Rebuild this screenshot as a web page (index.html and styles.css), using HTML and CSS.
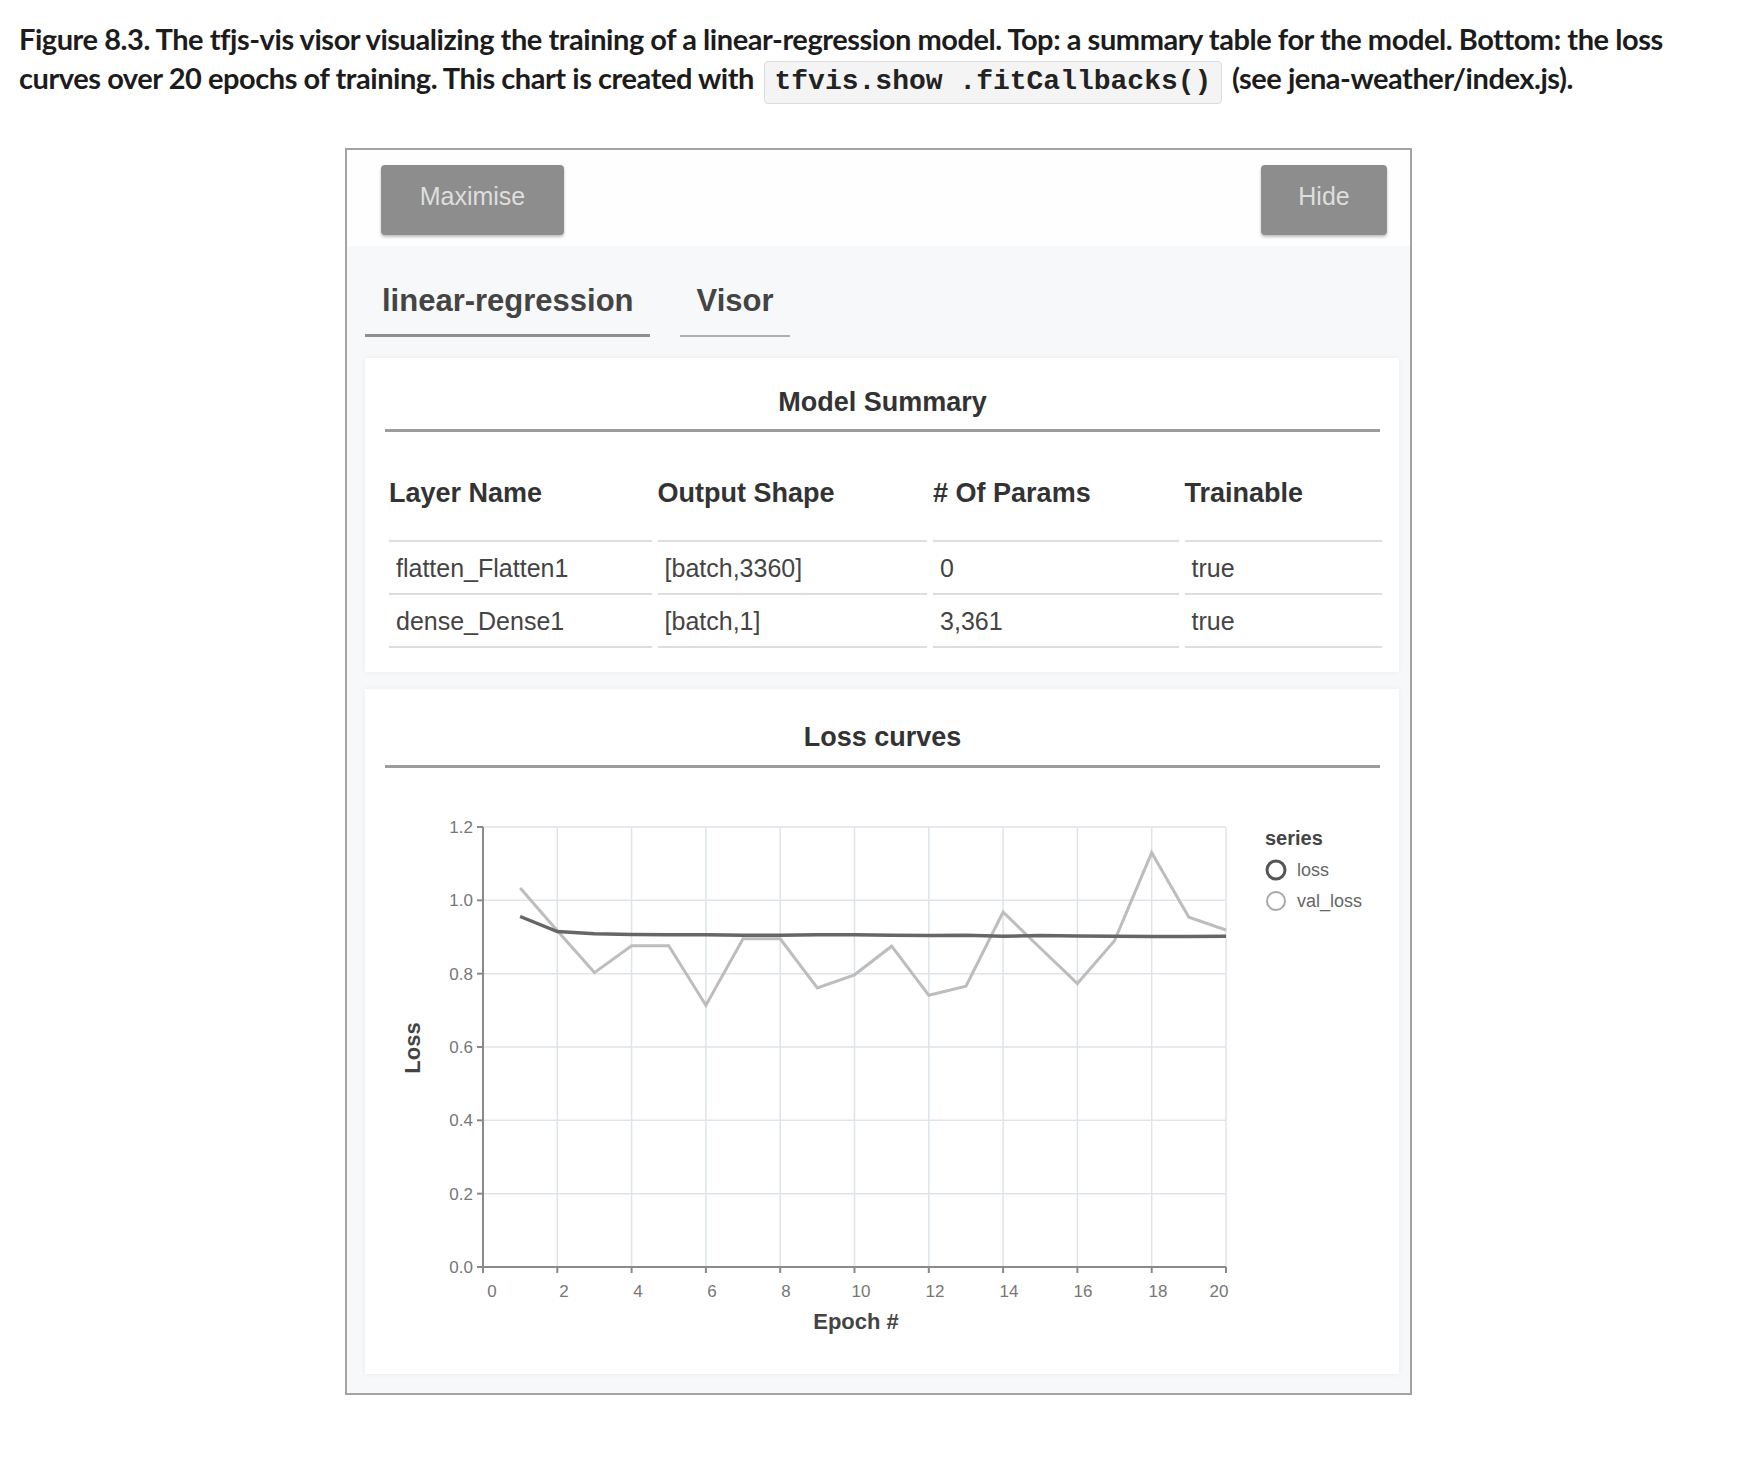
FILE: index.html
```html
<!DOCTYPE html>
<html>
<head>
<meta charset="utf-8">
<link rel="stylesheet" href="styles.css">
</head>
<body>
<p class="caption">Figure 8.3. The tfjs-vis visor visualizing the training of a linear-regression model. Top: a summary table for the model. Bottom: the loss curves over 20 epochs of training. This chart is created with <code class="code">tfvis.show .fitCallbacks()</code> (see jena-weather/index.js).</p>

<div class="visor">
  <div class="visor-head">
    <button class="btn btn-max">Maximise</button>
    <button class="btn btn-hide">Hide</button>
  </div>
  <div class="visor-body">
    <div class="tabs">
      <div class="tab tab-active">linear-regression</div>
      <div class="tab tab-visor">Visor</div>
    </div>

    <section class="card card-summary">
      <h2 class="card-title">Model Summary</h2>
      <table class="summary">
        <thead>
          <tr>
            <th class="c1">Layer Name</th>
            <th class="c2">Output Shape</th>
            <th class="c3"># Of Params</th>
            <th class="c4">Trainable</th>
          </tr>
        </thead>
        <tbody>
          <tr>
            <td>flatten_Flatten1</td>
            <td>[batch,3360]</td>
            <td>0</td>
            <td>true</td>
          </tr>
          <tr>
            <td>dense_Dense1</td>
            <td>[batch,1]</td>
            <td>3,361</td>
            <td>true</td>
          </tr>
        </tbody>
      </table>
    </section>

    <section class="card card-loss">
      <h2 class="card-title card-title-loss">Loss curves</h2>
      <svg class="chart" width="1034" height="570" viewBox="0 0 1034 570">
        <g class="grid">
          <line x1="118" y1="41" x2="861" y2="41"/>
          <line x1="118" y1="114.33" x2="861" y2="114.33"/>
          <line x1="118" y1="187.67" x2="861" y2="187.67"/>
          <line x1="118" y1="261" x2="861" y2="261"/>
          <line x1="118" y1="334.33" x2="861" y2="334.33"/>
          <line x1="118" y1="407.67" x2="861" y2="407.67"/>
          <line x1="192.3" y1="41" x2="192.3" y2="481"/>
          <line x1="266.6" y1="41" x2="266.6" y2="481"/>
          <line x1="340.9" y1="41" x2="340.9" y2="481"/>
          <line x1="415.2" y1="41" x2="415.2" y2="481"/>
          <line x1="489.5" y1="41" x2="489.5" y2="481"/>
          <line x1="563.8" y1="41" x2="563.8" y2="481"/>
          <line x1="638.1" y1="41" x2="638.1" y2="481"/>
          <line x1="712.4" y1="41" x2="712.4" y2="481"/>
          <line x1="786.7" y1="41" x2="786.7" y2="481"/>
          <line x1="861" y1="41" x2="861" y2="481"/>
        </g>
        <g class="axis">
          <line x1="118" y1="41" x2="118" y2="481"/>
          <line x1="118" y1="481" x2="861" y2="481"/>
          <line x1="112" y1="41" x2="118" y2="41"/>
          <line x1="112" y1="114.33" x2="118" y2="114.33"/>
          <line x1="112" y1="187.67" x2="118" y2="187.67"/>
          <line x1="112" y1="261" x2="118" y2="261"/>
          <line x1="112" y1="334.33" x2="118" y2="334.33"/>
          <line x1="112" y1="407.67" x2="118" y2="407.67"/>
          <line x1="112" y1="481" x2="118" y2="481"/>
          <line x1="118" y1="481" x2="118" y2="487"/>
          <line x1="192.3" y1="481" x2="192.3" y2="487"/>
          <line x1="266.6" y1="481" x2="266.6" y2="487"/>
          <line x1="340.9" y1="481" x2="340.9" y2="487"/>
          <line x1="415.2" y1="481" x2="415.2" y2="487"/>
          <line x1="489.5" y1="481" x2="489.5" y2="487"/>
          <line x1="563.8" y1="481" x2="563.8" y2="487"/>
          <line x1="638.1" y1="481" x2="638.1" y2="487"/>
          <line x1="712.4" y1="481" x2="712.4" y2="487"/>
          <line x1="786.7" y1="481" x2="786.7" y2="487"/>
          <line x1="861" y1="481" x2="861" y2="487"/>
        </g>
        <g class="ylabels">
          <text x="108" y="47">1.2</text>
          <text x="108" y="120.33">1.0</text>
          <text x="108" y="193.67">0.8</text>
          <text x="108" y="267">0.6</text>
          <text x="108" y="340.33">0.4</text>
          <text x="108" y="413.67">0.2</text>
          <text x="108" y="487">0.0</text>
        </g>
        <g class="xlabels">
          <text x="127" y="511">0</text>
          <text x="199" y="511">2</text>
          <text x="273" y="511">4</text>
          <text x="347" y="511">6</text>
          <text x="421" y="511">8</text>
          <text x="496" y="511">10</text>
          <text x="570" y="511">12</text>
          <text x="644" y="511">14</text>
          <text x="718" y="511">16</text>
          <text x="793" y="511">18</text>
          <text x="854" y="511">20</text>
        </g>
        <text class="axis-title" x="491" y="543">Epoch #</text>
        <text class="axis-title" transform="translate(55 262) rotate(-90)">Loss</text>
        <polyline class="val-line" points="155.15,101.9 192.3,144.8 229.45,186.6 266.6,159.8 303.75,159.8 340.9,219.2 378.05,152.8 415.2,152.8 452.35,202 489.5,188.8 526.65,160.2 563.8,209.3 600.95,200.1 638.1,126.1 675.25,162 712.4,197.6 749.55,154.7 786.7,66.7 823.85,131.2 861,144"/>
        <polyline class="loss-line" points="155.15,130.5 192.3,145.5 229.45,147.7 266.6,148.4 303.75,148.8 340.9,148.8 378.05,149.2 415.2,149.2 452.35,148.8 489.5,148.8 526.65,149.2 563.8,149.5 600.95,149.2 638.1,150.3 675.25,149.5 712.4,149.9 749.55,150.3 786.7,150.6 823.85,150.6 861,150.3"/>
        <g class="legend">
          <text class="legend-title" x="900" y="59">series</text>
          <circle class="lg-loss" cx="911" cy="84" r="9"/>
          <text x="932" y="90">loss</text>
          <circle class="lg-val" cx="911" cy="115" r="9"/>
          <text x="932" y="121">val_loss</text>
        </g>
      </svg>
    </section>
  </div>
</div>
</body>
</html>
```
FILE: styles.css
```css
html, body {
  margin: 0;
  padding: 0;
  background: #ffffff;
}

.caption {
  margin: 0;
  padding: 19px 0 0 19px;
  width: 1690px;
  font-family: "Lato", "Liberation Sans", sans-serif;
  font-weight: 700;
  font-size: 29px;
  line-height: 39px;
  color: #1c1c1c;
  letter-spacing: -0.45px;
}

.code {
  display: inline-block;
  font-family: "Liberation Mono", monospace;
  font-weight: 700;
  font-size: 28px;
  line-height: 31px;
  letter-spacing: 0;
  color: #222;
  background: #f4f4f4;
  border: 1px solid #dcdcdc;
  border-radius: 4px;
  padding: 4px 10px 6px;
  margin: -4px 3px;
  vertical-align: baseline;
}

.visor {
  margin: 48px 0 0 345px;
  width: 1063px;
  border: 2px solid #a3a3a3;
  background: #fdfdfd;
  font-family: "Liberation Sans", Arial, sans-serif;
  color: #333;
}

.visor-head {
  height: 96px;
  display: flex;
  justify-content: space-between;
  align-items: flex-start;
  padding: 15px 23px 0 34px;
  box-sizing: border-box;
  background: #fefefe;
}

.btn {
  height: 70px;
  border: none;
  border-radius: 4px;
  background: #8d8d8d;
  color: #dedede;
  font-family: "Liberation Sans", Arial, sans-serif;
  font-size: 25px;
  box-shadow: 0 2px 3px rgba(0, 0, 0, 0.25);
  padding: 0 0 7px 0;
}

.btn-max { width: 183px; }
.btn-hide { width: 126px; }

.visor-body {
  background: #f7f8f9;
  padding: 0 11px 19px 18px;
}

.tabs {
  display: flex;
  gap: 30px;
  padding-top: 37px;
}

.tab {
  font-weight: 700;
  font-size: 31px;
  line-height: 36px;
  color: #444;
  padding: 0 16px 15px 17px;
  border-bottom: 3px solid #8f8f8f;
}

.tab-visor {
  border-bottom: 2px solid #b0b0b0;
  padding-bottom: 16px;
}

.card {
  background: #ffffff;
  box-shadow: 0 0 5px rgba(0, 0, 0, 0.06);
  padding: 0 19px 0 20px;
}

.card-summary {
  margin-top: 21px;
  padding-bottom: 24px;
}

.card-loss {
  margin-top: 17px;
  padding: 0 0 18px 0;
}

.card-title {
  margin: 0;
  padding-top: 26px;
  padding-bottom: 9px;
  font-size: 27px;
  line-height: 36px;
  font-weight: 700;
  text-align: center;
  color: #333;
  border-bottom: 3px solid #9c9c9c;
}

.card-title-loss {
  margin: 0 19px 18px 20px;
  padding-top: 30px;
  padding-bottom: 10px;
}

.summary {
  border-collapse: separate;
  border-spacing: 6px 0;
  margin-left: -2px;
  width: 1005px;
}

.summary th {
  text-align: left;
  font-weight: 700;
  font-size: 27px;
  line-height: 34px;
  color: #333;
  padding: 44px 0 30px 0;
  border-bottom: 2px solid #dddddd;
}

.summary td {
  font-size: 25px;
  line-height: 30px;
  color: #444;
  padding: 11px 0 10px 7px;
  border-bottom: 2px solid #dddddd;
}

.summary .c1 { width: 262px; }
.summary .c2 { width: 269px; }
.summary .c3 { width: 245px; }
.summary .c4 { width: 197px; }

.chart {
  display: block;
  font-family: "Liberation Sans", Arial, sans-serif;
}

.grid line {
  stroke: #dfe4ea;
  stroke-width: 1.5;
}

.axis line {
  stroke: #8a8a8a;
  stroke-width: 2;
}

.ylabels text {
  font-size: 17px;
  fill: #777;
  text-anchor: end;
}

.xlabels text {
  font-size: 17px;
  fill: #777;
  text-anchor: middle;
}

.axis-title {
  font-size: 22px;
  font-weight: 700;
  fill: #444;
  text-anchor: middle;
}

.val-line {
  fill: none;
  stroke: #bdbdbd;
  stroke-width: 3;
  stroke-linejoin: miter;
}

.loss-line {
  fill: none;
  stroke: #666666;
  stroke-width: 3.5;
}

.legend text {
  font-size: 18px;
  fill: #666;
}

.legend .legend-title {
  font-size: 20px;
  font-weight: 700;
  fill: #444;
}

.lg-loss {
  fill: none;
  stroke: #555;
  stroke-width: 3;
}

.lg-val {
  fill: none;
  stroke: #a8a8a8;
  stroke-width: 2;
}
```
